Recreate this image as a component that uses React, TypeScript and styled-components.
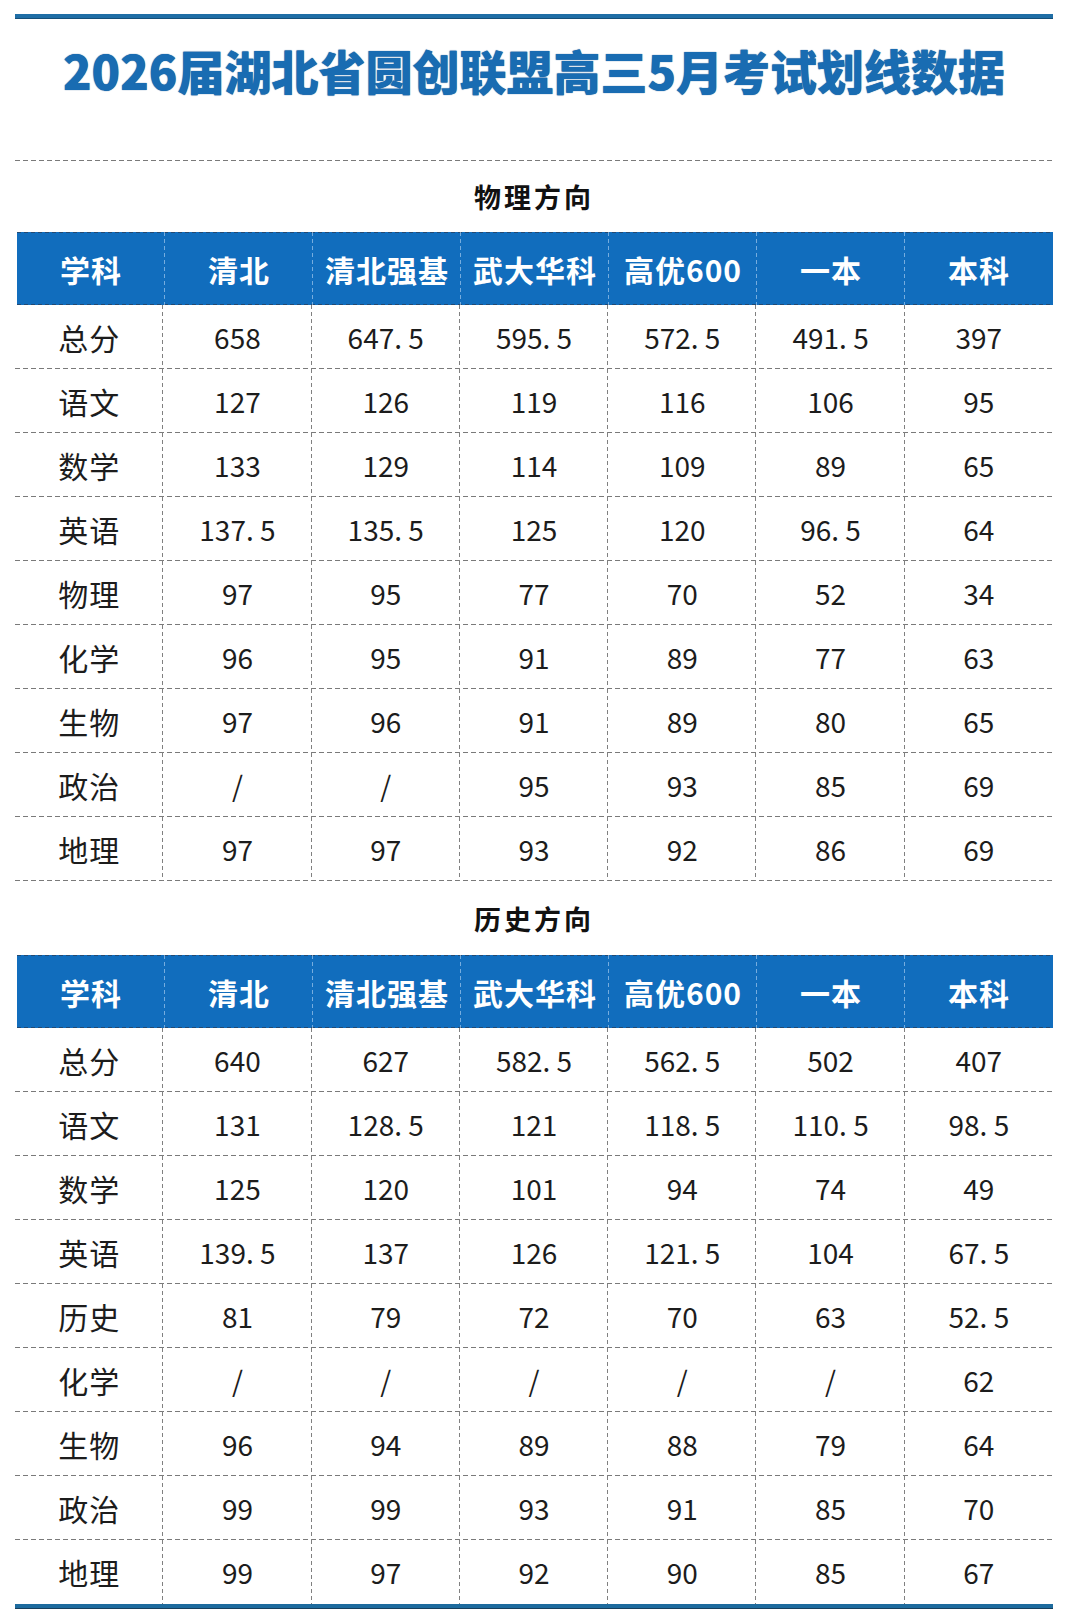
import React from 'react';
import styled, { createGlobalStyle } from 'styled-components';

const GlobalStyle = createGlobalStyle`
  html, body {
    margin: 0;
    padding: 0;
    background: #ffffff;
  }
  body {
    font-family: "Noto Sans CJK SC", "Noto Sans", sans-serif;
    color: #1c1c1c;
  }
`;

const COLUMNS = ['学科', '清北', '清北强基', '武大华科', '高优600', '一本', '本科'];

const physics: string[][] = [
  ['总分', '658', '647. 5', '595. 5', '572. 5', '491. 5', '397'],
  ['语文', '127', '126', '119', '116', '106', '95'],
  ['数学', '133', '129', '114', '109', '89', '65'],
  ['英语', '137. 5', '135. 5', '125', '120', '96. 5', '64'],
  ['物理', '97', '95', '77', '70', '52', '34'],
  ['化学', '96', '95', '91', '89', '77', '63'],
  ['生物', '97', '96', '91', '89', '80', '65'],
  ['政治', '/', '/', '95', '93', '85', '69'],
  ['地理', '97', '97', '93', '92', '86', '69'],
];

const history: string[][] = [
  ['总分', '640', '627', '582. 5', '562. 5', '502', '407'],
  ['语文', '131', '128. 5', '121', '118. 5', '110. 5', '98. 5'],
  ['数学', '125', '120', '101', '94', '74', '49'],
  ['英语', '139. 5', '137', '126', '121. 5', '104', '67. 5'],
  ['历史', '81', '79', '72', '70', '63', '52. 5'],
  ['化学', '/', '/', '/', '/', '/', '62'],
  ['生物', '96', '94', '89', '88', '79', '64'],
  ['政治', '99', '99', '93', '91', '85', '70'],
  ['地理', '99', '97', '92', '90', '85', '67'],
];

const Page = styled.div`
  width: 1068px;
  height: 1620px;
  box-sizing: border-box;
  padding: 14px 15px 0 15px;
  overflow: hidden;
`;

const Rule = styled.div`
  height: 4px;
  background: #1f6ea6;
  box-shadow: 0 1px 0 #164f78;
`;

const Title = styled.h1`
  margin: 22px 0 0;
  height: 60px;
  line-height: 60px;
  text-align: center;
  font-size: 47px;
  font-weight: 900;
  color: #196cb2;
  text-shadow: 0 0 1px #0d4d88;
`;

const DashLine = styled.div`
  margin-top: 60px;
  height: 1px;
  background-image: repeating-linear-gradient(90deg, #7a7a7a 0 5px, transparent 5px 8px);
`;

const SectionTitle = styled.div<{ $h: number }>`
  height: ${(p) => p.$h}px;
  display: flex;
  align-items: center;
  justify-content: center;
  font-size: 27px;
  font-weight: 700;
  letter-spacing: 3px;
  color: #111;
`;

const Grid = styled.div`
  display: grid;
  grid-template-columns: repeat(7, 1fr);
`;

const HeadRow = styled(Grid)`
  height: 73px;
  margin-left: 2px;
  background-color: #116dbd;
  background-image: repeating-linear-gradient(90deg, #234a73 0 4px, transparent 4px 7px),
    repeating-linear-gradient(90deg, #234a73 0 4px, transparent 4px 7px);
  background-size: 100% 1px, 100% 1px;
  background-position: left top, left bottom;
  background-repeat: no-repeat;
`;

const HeadCell = styled.div<{ $last?: boolean }>`
  display: flex;
  align-items: center;
  justify-content: center;
  color: #ffffff;
  font-size: 30px;
  font-weight: 700;
  letter-spacing: 1px;
  white-space: nowrap;
  background-image: ${(p) =>
    p.$last ? 'none' : 'repeating-linear-gradient(180deg, rgba(200,225,250,0.55) 0 4px, transparent 4px 7px)'};
  background-size: 1px 100%;
  background-position: right top;
  background-repeat: no-repeat;
`;

const BodyRow = styled(Grid)<{ $last?: boolean }>`
  height: 64px;
  background-image: ${(p) =>
    p.$last ? 'none' : 'repeating-linear-gradient(90deg, #7a7a7a 0 5px, transparent 5px 8px)'};
  background-size: 100% 1px;
  background-position: left bottom;
  background-repeat: no-repeat;
`;

const Cell = styled.div<{ $last?: boolean; $label?: boolean }>`
  display: flex;
  align-items: center;
  justify-content: center;
  font-size: ${(p) => (p.$label ? 30 : 28)}px;
  letter-spacing: ${(p) => (p.$label ? 1 : 0)}px;
  color: #1c1c1c;
  white-space: pre;
  background-image: ${(p) =>
    p.$last ? 'none' : 'repeating-linear-gradient(180deg, #808080 0 4px, transparent 4px 7px)'};
  background-size: 1px 100%;
  background-position: right top;
  background-repeat: no-repeat;
`;

const BottomRule = styled.div`
  height: 4px;
  background: #1d6b9e;
  box-shadow: 0 1px 0 #173f5c;
`;

interface ScoreTableProps {
  rows: string[][];
  closed?: boolean; // last table has no dashed line under its last row
}

const ScoreTable: React.FC<ScoreTableProps> = ({ rows, closed }) => {
  return (
    <>
      <HeadRow>
        {COLUMNS.map((c, i) => (
          <HeadCell key={c} $last={i === COLUMNS.length - 1}>
            {c}
          </HeadCell>
        ))}
      </HeadRow>
      {rows.map((row, r) => (
        <BodyRow key={row[0]} $last={closed && r === rows.length - 1}>
          {row.map((v, i) => (
            <Cell key={i} $label={i === 0} $last={i === row.length - 1}>
              {v}
            </Cell>
          ))}
        </BodyRow>
      ))}
    </>
  );
};

const App: React.FC = () => {
  return (
    <>
      <GlobalStyle />
      <Page>
        <Rule />
        <Title>2026届湖北省圆创联盟高三5月考试划线数据</Title>
        <DashLine />
        <SectionTitle $h={71}>物理方向</SectionTitle>
        <ScoreTable rows={physics} />
        <SectionTitle $h={74}>历史方向</SectionTitle>
        <ScoreTable rows={history} closed />
        <BottomRule />
      </Page>
    </>
  );
};

export default App;
